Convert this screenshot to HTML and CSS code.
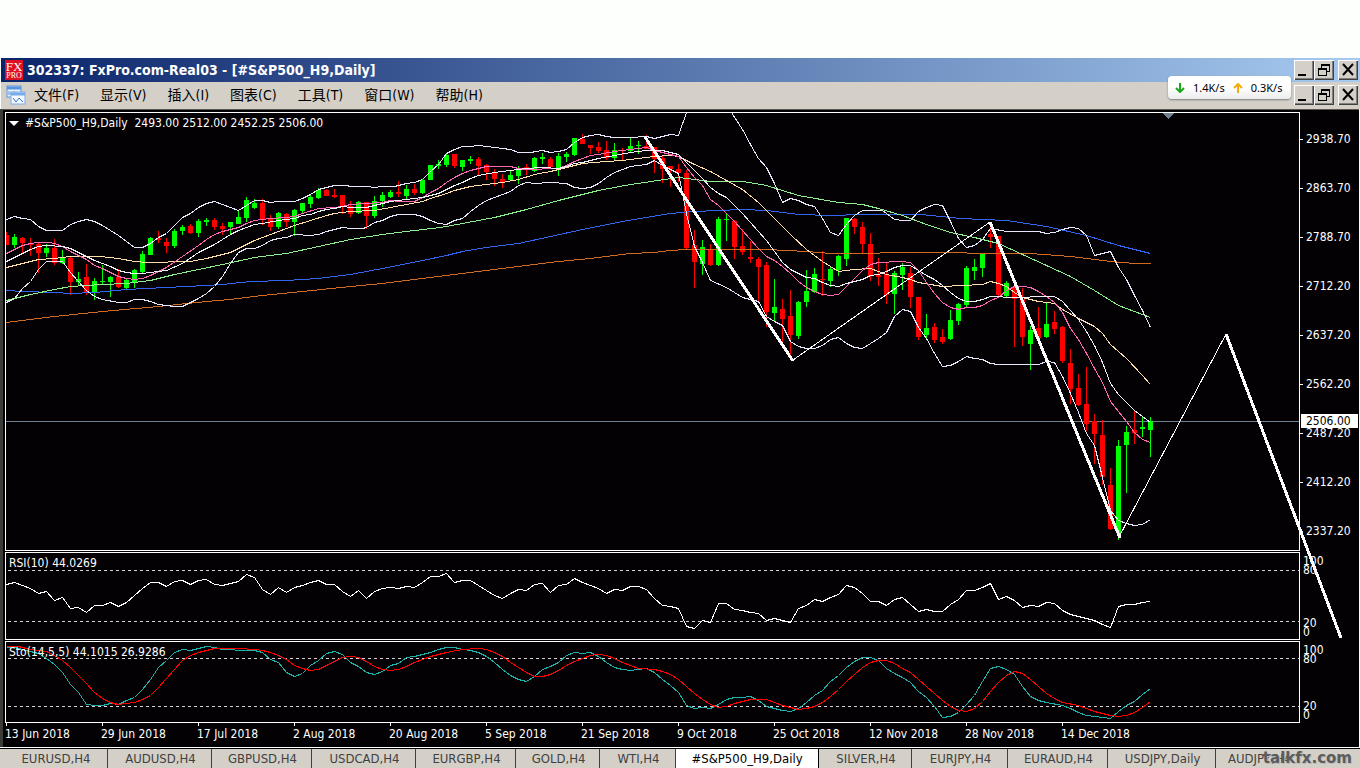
FILE: index.html
```html
<!DOCTYPE html>
<html lang="zh-CN">
<head>
<meta charset="utf-8">
<title>302337: FxPro.com-Real03 - [#S&amp;P500_H9,Daily]</title>
<link rel="stylesheet" href="styles.css">
</head>
<body>
<div class="window">
  <header class="titlebar">
    <div class="app-logo" aria-hidden="true"><span class="logo-fx">FX</span><span class="logo-pro">PRO</span></div>
    <h1 class="title">302337: FxPro.com-Real03 - [#S&amp;P500_H9,Daily]</h1>
    <div class="controls">
      <button class="control" aria-label="最小化"><svg viewBox="0 0 20 20"><path d="M4 14h8v2H4z"/></svg></button>
      <button class="control" aria-label="还原"><svg viewBox="0 0 20 20"><path d="M7 4h9v8h-3v4H4V8h3zM8 6v2h5v3h2V6zM5 10v5h7v-5z" fill-rule="evenodd"/></svg></button>
      <button class="control control-close" aria-label="关闭"><svg viewBox="0 0 20 20"><path d="M5 4l10 11M15 4L5 15" stroke="#000" stroke-width="2"/></svg></button>
    </div>
  </header>
  <nav class="menubar">
    <svg class="chart-logo" viewBox="0 0 20 20" aria-hidden="true">
      <rect x="1" y="1" width="14" height="11" fill="#e8f1fc" stroke="#5a94dc"/>
      <path d="M1 3h14" stroke="#5a94dc" stroke-width="3"/>
      <path d="M3 10V6M5 10V7M8 10V6" stroke="#5a94dc" fill="none"/>
      <rect x="5" y="7" width="14" height="12" fill="#f4f9ff" stroke="#78abea"/>
      <path d="M5 9h14" stroke="#78abea" stroke-width="3"/>
      <path d="M7 13l3 4 3-4 4 4" stroke="#3b79c9" fill="none"/>
    </svg>
    <button class="menu">文件(F)</button>
    <button class="menu">显示(V)</button>
    <button class="menu">插入(I)</button>
    <button class="menu">图表(C)</button>
    <button class="menu">工具(T)</button>
    <button class="menu">窗口(W)</button>
    <button class="menu">帮助(H)</button>
    <div class="controls">
      <button class="control" aria-label="最小化图表"><svg viewBox="0 0 20 20"><path d="M4 14h8v2H4z"/></svg></button>
      <button class="control" aria-label="还原图表"><svg viewBox="0 0 20 20"><path d="M7 4h9v8h-3v4H4V8h3zM8 6v2h5v3h2V6zM5 10v5h7v-5z" fill-rule="evenodd"/></svg></button>
      <button class="control control-close" aria-label="关闭图表"><svg viewBox="0 0 20 20"><path d="M5 4l10 11M15 4L5 15" stroke="#000" stroke-width="2"/></svg></button>
    </div>
  </nav>
  <aside class="net-speed">
    <svg viewBox="0 0 10 10"><path d="M5 0v9M1 5l4 4 4-4" stroke="#17a81c" stroke-width="2" fill="none"/></svg>
    <span>1.4K/s</span>
    <svg viewBox="0 0 10 10"><path d="M5 10V1M1 5l4-4 4 4" stroke="#f5a90b" stroke-width="2" fill="none"/></svg>
    <span>0.3K/s</span>
  </aside>

  <main class="workspace">
    <section class="pane pane-price">
      <svg class="plot" id="price" viewBox="6 113 1293 437" preserveAspectRatio="none"></svg>
      <p class="pane-label pane-label-price"><span class="caret"></span>#S&amp;P500_H9,Daily&nbsp; 2493.00 2512.00 2452.25 2506.00</p>
    </section>
    <div class="axis axis-price">
      <span>2938.70</span><span>2863.70</span><span>2788.70</span><span>2712.20</span><span>2637.20</span><span>2562.20</span><span>2487.20</span><span>2412.20</span><span>2337.20</span>
      <strong class="price-tag">2506.00</strong>
    </div>
    <section class="pane pane-rsi">
      <svg class="plot" id="rsi" viewBox="6 553 1293 86" preserveAspectRatio="none"></svg>
      <p class="pane-label">RSI(10) 44.0269</p>
    </section>
    <div class="axis axis-level">
      <div><span>100</span><span>80</span></div>
      <div><span>20</span><span>0</span></div>
    </div>
    <section class="pane pane-sto">
      <svg class="plot" id="sto" viewBox="6 642 1293 80" preserveAspectRatio="none"></svg>
      <p class="pane-label">Sto(14,5,5) 44.1015 26.9286</p>
    </section>
    <div class="axis axis-level">
      <div><span>100</span><span>80</span></div>
      <div><span>20</span><span>0</span></div>
    </div>
    <div class="dates">
      <span>13 Jun 2018</span><span>29 Jun 2018</span><span>17 Jul 2018</span><span>2 Aug 2018</span><span>20 Aug 2018</span><span>5 Sep 2018</span><span>21 Sep 2018</span><span>9 Oct 2018</span><span>25 Oct 2018</span><span>12 Nov 2018</span><span>28 Nov 2018</span><span>14 Dec 2018</span>
    </div>
    <svg class="trend" viewBox="5 112 1354 636" preserveAspectRatio="none" aria-hidden="true">
      <path class="trend-thin" d="M793 360L990 222M1119 537L1226 334"/>
      <path class="trend-thick" d="M645 137L793 361M990 222L1120 538M1226 334L1341 638"/>
    </svg>
  </main>

  <footer class="tabs" role="tablist">
    <button class="tab" role="tab">EURUSD,H4</button>
    <button class="tab" role="tab">AUDUSD,H4</button>
    <button class="tab" role="tab">GBPUSD,H4</button>
    <button class="tab" role="tab">USDCAD,H4</button>
    <button class="tab" role="tab">EURGBP,H4</button>
    <button class="tab" role="tab">GOLD,H4</button>
    <button class="tab" role="tab">WTI,H4</button>
    <button class="tab tab-active" role="tab" aria-selected="true">#S&amp;P500_H9,Daily</button>
    <button class="tab" role="tab">SILVER,H4</button>
    <button class="tab" role="tab">EURJPY,H4</button>
    <button class="tab" role="tab">EURAUD,H4</button>
    <button class="tab" role="tab">USDJPY,Daily</button>
    <button class="tab tab-last" role="tab">AUDJPY,H4</button>
    <span class="watermark">talkfx.com</span>
  </footer>
</div>
<script src="chart.js"></script>
</body>
</html>
```
FILE: styles.css
```css
* { box-sizing: border-box; }

body {
  margin: 0;
  background: #fdfffc;
  color: #000;
  font-family: "DejaVu Sans Condensed", "Noto Sans CJK SC", sans-serif;
  font-size: 12px;
  overflow: hidden;
}

button {
  margin: 0;
  padding: 0;
  border: 0;
  background: none;
  color: inherit;
  font: inherit;
}

.window {
  position: relative;
  display: flex;
  flex-direction: column;
  min-height: 100vh;
  padding-top: 58px;
}

.titlebar {
  display: flex;
  align-items: center;
  height: 24px;
  padding: 0 2px 0 4px;
  margin-left: 1px;
  background: linear-gradient(90deg, #0a246a, #a6caf0);
}

.app-logo {
  display: flex;
  flex-direction: column;
  align-items: center;
  justify-content: center;
  width: 18px;
  height: 20px;
  background: #e01022;
  color: #fff;
  font-family: "Liberation Serif", serif;
}

.logo-fx { font-size: 13px; line-height: 11px; }
.logo-pro { font-size: 8px; line-height: 8px; }

.title {
  flex: 1;
  margin: 0 0 0 4px;
  color: #fff;
  font-size: 14px;
  font-weight: bold;
  line-height: 20px;
  white-space: nowrap;
}

.controls { display: flex; margin-left: auto; }

.control {
  width: 20px;
  height: 20px;
  background: #d4d0c8;
  box-shadow: inset 1px 1px #fff, inset -1px -1px #404040, inset -2px -2px #808080;
}

.control svg { display: block; width: 20px; height: 20px; shape-rendering: crispEdges; }
.control-close { margin-left: 4px; }
.control-close svg { shape-rendering: auto; }

.menubar {
  display: flex;
  align-items: center;
  gap: 21px;
  height: 27px;
  padding: 0 2px 2px 5px;
  margin-left: 1px;
  background: #d4d0c8;
}

.chart-logo { width: 20px; height: 20px; margin-right: -13px; }

.menu {
  font-size: 14px;
  line-height: 24px;
  white-space: nowrap;
}

.net-speed {
  position: absolute;
  top: 76px;
  right: 69px;
  display: flex;
  align-items: center;
  gap: 8px;
  width: 123px;
  height: 23px;
  padding: 0 7px;
  border-radius: 4px;
  background: linear-gradient(#fff, #fff 50%, #ececec);
  box-shadow: 0 1px 2px #7d7d7d;
  font-family: "Noto Sans", sans-serif;
  font-size: 11px;
}

.net-speed svg { flex: none; width: 10px; height: 10px; }

.workspace {
  position: relative;
  display: grid;
  grid-template-columns: 1fr 59px;
  grid-template-rows: 439px 88px 82px auto;
  row-gap: 1px;
  padding: 2px 0 0 2px;
  margin-right: 1px;
  border-top: 1px solid #58564f;
  border-left: 3px solid #3b3c38;
  background: #030104;
  color: #fff;
}

.pane { position: relative; min-width: 0; border: 1px solid #fff; }
.plot { display: block; width: 100%; height: 100%; shape-rendering: crispEdges; }
.plot polyline { fill: none; stroke-width: 1; }

.pane-label {
  position: absolute;
  top: 2px;
  left: 3px;
  margin: 0;
  line-height: 16px;
  white-space: nowrap;
}

.pane-label-price { display: flex; align-items: center; gap: 6px; }

.caret {
  border: 5px solid transparent;
  border-top-color: #fff;
  border-bottom-width: 0;
}

.axis { position: relative; display: flex; flex-direction: column; }
.axis span { display: block; padding-left: 6px; }
.axis-price { padding-top: 3px; }
.axis-price span { position: relative; line-height: 49px; }

.axis-price span::before {
  content: "";
  position: absolute;
  top: 24px;
  left: 0;
  width: 3px;
  height: 1px;
  background: #fff;
}

.price-tag {
  position: absolute;
  top: 302px;
  left: 1px;
  right: 1px;
  padding-left: 5px;
  background: #fff;
  color: #000;
  font-weight: normal;
  line-height: 14px;
}

.axis-level { justify-content: space-between; padding: 5px 0 3px; }
.axis-level span { padding-left: 3px; line-height: 9px; }

.dates {
  display: grid;
  grid-template-columns: repeat(12, 96fr) 143fr;
  height: 25px;
  margin-top: -1px;
}

.dates span { position: relative; line-height: 22px; white-space: nowrap; }

.dates span::before {
  content: "";
  position: absolute;
  top: 0;
  left: 1px;
  width: 1px;
  height: 3px;
  background: #fff;
}

.trend {
  position: absolute;
  top: 2px;
  left: 2px;
  width: calc(100% - 2px);
  height: calc(100% - 2px);
  pointer-events: none;
  shape-rendering: crispEdges;
  fill: none;
  stroke: #fff;
}

.trend-thin { stroke-width: 1; }
.trend-thick { stroke-width: 3; }

.tabs {
  position: relative;
  display: grid;
  grid-template-columns: 105fr 104fr 100fr 104fr 100fr 84fr 76fr 143fr 93fr 96fr 100fr 108fr 144fr;
  flex: 1;
  padding-left: 3px;
  border-top: 1px solid #000;
  outline: 1px solid #fff;
  background: #d4d0c8;
  overflow: hidden;
}

.tab {
  padding-left: 2px;
  border-right: 1px solid #404040;
  color: #404040;
  font-size: 13px;
  line-height: 19px;
  white-space: nowrap;
}

.tab-active {
  padding-left: 0;
  border-right-color: #000;
  background: #fff;
  color: #000;
}

.tab-last { padding-left: 12px; border-right: 0; text-align: left; }

.watermark {
  position: absolute;
  right: 8px;
  bottom: 1px;
  color: #5c5c5c;
  font-family: "DejaVu Sans", sans-serif;
  font-size: 15px;
  font-weight: bold;
  line-height: 18px;
  text-shadow: 1px 1px #b8b8b8;
}
```
FILE: chart.js
```js
const STEP = 8;
const FIRST_X = 6;
const UP = "#00ff00";
const DOWN = "#ff0000";

// One bar per entry: direction, high, body top, body bottom, low.
const bars = `
d232,235,245,245 u234,237,245,248 d237,238,243,253 d238,244,245,256 d243,244,253,273
u244,248,253,257 d239,248,263,265 u250,257,263,264 d257,258,282,295 u272,279,282,286
d264,277,292,295 u278,281,292,300 u265,281,282,284 u276,277,282,297 d269,277,287,288
u279,280,288,289 u269,270,282,288 u251,254,272,274 u237,238,255,255 d231,238,240,243
d238,242,246,253 u229,231,246,248 u225,227,231,235 d224,226,233,234 u219,221,233,237
u218,220,222,226 d218,220,227,230 d223,226,229,235 u222,222,227,235 u210,217,224,224
u197,200,218,222 u199,203,208,209 d199,203,219,225 d215,218,227,231 u212,213,227,229
d213,214,222,227 u209,210,222,236 u203,203,211,213 u195,197,204,208 u188,190,198,199
d189,190,196,196 d189,195,197,198 d195,195,206,214 d201,206,214,217 u201,202,213,214
d202,202,216,229 u196,201,216,218 u192,195,201,207 u190,192,197,198 d181,192,194,197
u185,189,196,199 d184,189,193,195 u179,180,193,194 u165,165,180,180 u160,164,166,169
u153,155,165,167 d154,154,166,168 u160,160,167,171 u156,159,161,164 d157,159,166,175
d164,165,172,180 d169,173,179,186 d174,179,182,188 u170,175,180,180 u166,169,176,184
d164,167,169,175 u157,158,171,172 u153,157,159,164 d157,159,167,168 u153,156,169,176
u152,154,157,162 u138,138,155,156 d134,139,144,144 d145,145,148,154 d142,147,151,153
d141,150,158,160 u143,150,158,160 d148,150,151,160 u138,146,151,152 u141,145,146,154
d135,146,149,149 d147,147,159,173 d155,158,169,183 d166,166,169,187 d164,169,173,182
d170,173,248,250 d230,245,262,288 u240,247,264,275 d244,250,265,266 u217,219,265,266
u214,219,220,241 d220,221,247,259 d229,246,252,255 d241,257,259,263 d257,259,267,301
d262,265,312,327 u279,307,313,321 d299,309,319,343 d290,316,335,355 u301,302,336,339
u270,291,302,307 u268,274,292,293 d251,279,280,296 u266,269,281,287 u255,256,270,276
u218,218,259,266 d218,219,227,234 d222,227,244,253 d233,244,276,281 d258,275,277,286
d263,274,295,304 u271,273,294,314 u263,267,275,290 d267,273,297,308 d297,297,337,340
u314,328,335,340 d323,327,340,343 d329,337,342,344 u310,320,339,340 u303,304,321,325
u266,268,305,307 u259,267,271,280 u253,254,268,277 d227,234,237,248 d236,236,295,297
u281,283,296,297 d286,287,299,347 d288,299,337,346 u326,330,344,370 d307,328,338,342
u302,324,337,338 d311,322,329,334 d326,327,361,363 d349,363,389,404 d374,388,405,406
d367,404,424,431 d414,421,434,464 d420,435,477,485 d468,485,529,530 u440,446,533,540
u426,432,445,493 d410,430,433,444 u417,427,429,437 u417,421,430,457`.trim().split(/\s+/);

const averages = [
  ["#d2691e", "6,322 54,316 102,311 158,306 206,301 230,299 262,295 302,291 350,286 382,283 422,278 446,275 486,270 526,265 558,261 590,258 630,253 654,252 670,250 686,249 766,249 806,251 830,253 860,253 900,252 1030,253 1070,256 1110,261 1134,263 1150,263"],
  ["#3465f0", "6,290 22,291 54,292 70,293 94,292 126,289 166,287 206,285 222,284 250,281 286,280 318,278 350,274 382,268 422,260 446,255 462,251 486,247 518,243 550,236 582,229 622,221 646,217 670,213 694,211 742,209 766,210 798,214 830,215 862,214 920,214 960,218 1006,220 1046,226 1086,235 1118,245 1150,253"],
  ["#90ee90", "6,300 30,294 54,289 70,286 102,284 126,283 150,280 174,274 198,269 222,264 254,257 286,253 318,246 350,239 382,234 414,230 440,227 462,223 494,217 526,209 558,200 598,190 630,184 678,177 694,179 710,181 742,181 766,185 798,195 838,202 862,204 878,208 902,215 926,224 950,232 974,237 998,243 1022,254 1046,265 1070,276 1094,290 1118,305 1134,311 1150,317"],
  ["#ffdead", "6,267 22,263 38,259 54,258 70,256 100,256 118,258 134,261 146,262 190,261 206,258 222,254 230,252 238,248 246,244 254,240 270,234 286,228 294,225 310,220 326,215 334,213 350,211 374,210 390,207 406,204 422,201 430,198 446,193 454,190 470,186 486,184 502,182 518,179 534,174 550,171 566,167 582,163 606,161 622,160 638,158 654,156 670,155 678,156 694,164 710,171 726,180 742,189 758,202 774,218 790,234 806,249 822,261 838,271 854,269 870,268 886,274 902,277 910,279 918,282 942,286 982,284 990,281 998,283 1006,286 1014,292 1022,297 1038,301 1054,303 1062,309 1078,318 1094,326 1102,333 1110,344 1126,358 1142,375 1150,384"],
  ["#ff69b4", "6,253 14,249 22,245 30,243 38,242 48,242 54,243 62,246 70,251 78,255 86,259 94,265 102,268 110,272 118,276 126,278 134,279 142,278 150,275 166,267 182,256 198,245 206,239 214,234 222,231 230,229 238,227 246,223 254,220 262,219 270,218 286,217 294,216 302,213 318,208 334,207 342,206 350,204 366,203 382,202 390,200 398,201 414,201 422,197 430,192 438,188 446,182 454,177 462,173 470,170 478,168 486,166 510,166 518,168 526,169 558,168 566,165 574,161 582,158 590,155 598,154 614,151 630,149 646,147 654,150 662,152 678,156 686,167 694,177 702,185 710,199 718,205 726,213 734,221 742,230 750,239 758,248 766,256 774,260 782,266 790,273 798,281 806,287 814,291 822,294 830,295 838,294 846,286 854,278 862,270 870,264 878,262 900,261 910,262 918,270 926,282 934,293 942,302 950,307 958,309 966,307 974,307 982,305 990,300 998,297 1006,290 1014,286 1022,286 1030,287 1038,291 1046,296 1054,302 1062,312 1070,328 1078,339 1086,353 1094,368 1102,382 1110,401 1118,411 1126,421 1134,432 1142,439 1150,442"],
  ["#f0f0fa", "6,261 14,257 22,253 30,249 38,246 46,245 62,246 70,248 78,252 86,256 94,260 102,263 110,266 118,270 126,272 134,273 142,273 150,272 166,270 182,263 198,252 214,244 222,239 230,234 238,230 246,227 254,224 262,223 278,220 294,218 302,215 310,214 318,211 326,209 334,208 342,206 350,207 366,207 374,205 382,203 390,201 406,199 422,197 430,195 438,193 446,189 454,185 462,182 470,178 478,175 494,172 510,170 526,168 542,167 558,168 566,166 574,163 582,162 598,158 614,155 630,152 646,150 662,150 670,152 678,154 686,162 694,170 702,178 710,187 718,193 726,197 734,205 742,213 750,222 758,231 766,240 774,251 782,262 790,269 798,273 806,277 814,278 822,282 830,285 838,286 846,283 854,281 862,279 870,275 878,274 886,271 894,267 902,265 910,265 918,270 926,275 934,279 942,285 950,292 958,298 966,301 974,301 982,299 990,296 998,296 1006,297 1054,296 1062,301 1070,310 1078,319 1086,331 1094,345 1102,362 1110,383 1118,394 1126,402 1134,410 1142,416 1150,422"],
];

const bands = [
  ["#e6e6fa", "6,219 14,216 22,218 30,219 38,226 46,230 62,230 70,224 78,221 86,219 94,221 102,225 110,230 118,235 126,241 134,247 142,247 150,243 158,237 166,233 174,225 182,217 190,213 198,207 206,203 214,201 222,204 230,207 238,210 246,205 254,200 262,200 270,202 278,201 294,201 302,198 310,194 318,189 326,187 334,185 346,185 350,186 366,186 374,187 382,186 394,186 398,185 406,183 414,182 422,179 430,171 438,164 446,153 454,149 462,146 470,146 478,145 494,147 510,149 518,152 530,152 542,150 550,152 558,151 566,149 574,142 582,137 590,135 598,134 606,136 614,137 630,137 646,136 654,138 662,136 670,134 678,135 686,112"],
  ["#e6e6fa", "731,112 742,129 750,144 758,158 766,167 774,183 782,202 790,198 798,200 806,204 814,206 822,218 830,232 838,235 846,224 854,215 862,210 882,210 886,213 894,219 902,220 910,220 918,211 926,207 934,204 942,205 950,221 958,238 966,247 974,245 982,239 990,228 1006,231 1038,231 1046,233 1054,232 1062,229 1070,227 1078,228 1086,235 1094,255 1110,251 1118,267 1126,279 1134,295 1142,310 1150,327"],
  ["#e6e6fa", "6,302 14,298 22,288 30,281 38,269 46,261 62,261 70,272 78,281 86,290 94,296 102,299 118,302 126,302 134,299 142,299 150,301 158,304 174,306 182,306 190,302 198,298 206,293 214,286 222,276 230,263 238,252 246,248 254,248 262,245 270,240 278,238 286,237 294,234 310,235 318,234 326,231 334,229 342,227 350,228 362,228 366,227 374,222 382,220 390,216 398,214 414,214 422,216 430,220 438,223 446,224 454,220 462,218 470,211 478,205 486,200 494,197 502,194 510,191 518,185 526,182 534,183 550,182 566,183 574,187 582,188 590,187 598,183 606,177 614,172 622,169 630,166 646,164 654,160 662,165 670,169 678,173 686,213 694,246 702,262 710,280 726,287 742,297 758,301 766,316 774,321 782,325 790,341 798,346 806,348 814,348 822,345 830,339 838,337 846,343 854,347 862,348 870,343 878,338 886,332 894,316 902,309 910,311 918,327 926,338 934,353 942,366 950,365 958,361 966,356 974,358 982,359 990,363 998,364 1038,364 1046,361 1054,362 1062,376 1070,393 1078,412 1086,433 1094,445 1102,477 1110,510 1118,520 1126,523 1134,525 1142,524 1150,519"],
];

// Relative strength, one value per bar.
const rsi = [
  584,582,585,588,593,591,600,597,608,607,612,605,605,602,606,602,595,588,582,582,586,581,580,584,
  580,579,584,585,583,581,574,577,589,594,587,592,587,585,582,580,584,584,591,596,590,598,591,588,
  587,588,586,587,582,576,576,573,582,580,580,585,590,595,598,593,589,590,584,583,592,585,584,578,
  582,585,588,593,589,590,586,586,589,598,605,606,608,626,628,620,622,603,603,609,610,612,613,620,
  618,620,622,608,605,599,601,597,594,585,587,593,601,601,605,599,597,604,611,609,611,611,604,599,
  590,590,587,583,599,596,600,607,605,606,602,603,610,614,616,618,620,624,627,606,604,604,602,601,
];

// Stochastic main and signal lines.
const main = "6,647 14,647 22,649 30,651 38,653 46,658 54,664 62,672 70,684 78,692 86,704 94,705 102,705 110,703 118,704 126,700 134,697 142,689 150,679 158,667 166,660 174,652 182,649 190,650 198,648 206,646 214,647 222,649 230,649 238,650 254,650 262,652 270,659 278,662 286,672 294,676 302,673 310,665 318,660 326,653 334,651 342,654 350,662 358,666 366,672 374,674 382,671 390,665 398,663 406,657 414,656 422,654 430,652 438,649 446,647 454,647 462,649 470,650 478,652 486,656 494,662 502,669 510,675 518,679 526,681 534,676 542,669 550,666 558,662 566,655 574,652 582,653 590,652 598,656 606,662 614,667 622,669 630,670 638,669 646,668 654,672 662,679 670,685 678,692 686,705 694,708 702,707 710,708 718,704 726,699 734,697 742,697 750,696 758,700 766,706 774,708 782,710 790,711 798,708 806,702 814,695 822,690 830,681 838,675 846,667 854,661 862,657 870,657 878,660 886,668 894,673 902,677 910,682 918,691 926,697 934,706 942,717 950,716 958,712 966,704 974,695 982,681 990,668 998,666 1006,669 1014,674 1022,686 1030,696 1038,700 1046,702 1062,705 1070,708 1078,712 1086,715 1094,716 1110,718 1118,711 1126,705 1134,701 1142,694 1150,688";
const signal = "6,646 18,646 30,649 46,651 54,655 62,660 70,667 78,675 86,683 94,692 102,698 110,702 118,704 134,702 142,699 150,695 158,687 166,678 174,669 182,660 190,655 198,652 206,650 214,648 238,648 254,649 262,650 270,652 278,655 286,659 294,665 302,668 310,670 318,669 326,665 334,661 342,657 350,656 358,657 366,661 374,666 382,669 390,670 398,669 406,666 414,662 430,656 446,652 462,649 478,648 486,649 494,652 502,656 510,662 518,667 526,672 534,676 542,676 550,674 558,670 566,665 574,661 582,658 590,655 598,654 606,655 614,658 622,662 630,665 638,668 654,669 662,671 670,674 678,679 686,686 694,693 702,699 710,704 718,707 726,706 734,703 742,701 750,699 766,699 774,702 782,705 790,707 798,709 806,708 814,706 822,702 830,696 838,689 846,681 854,674 862,667 870,662 878,660 886,660 894,663 902,668 910,672 918,679 926,686 934,693 942,700 950,706 958,710 966,711 974,708 982,701 990,691 998,682 1006,675 1014,671 1022,673 1030,679 1038,686 1046,693 1054,698 1062,702 1078,705 1094,711 1110,715 1118,716 1126,715 1134,712 1142,707 1150,701";

function line(color, points) {
  return `<polyline transform="translate(.5 .5)" stroke="${color}" points="${points}"/>`;
}

function level(y) {
  return `<path transform="translate(.5 .5)" d="M7 ${y}H1299" stroke="#d8cfd8" stroke-dasharray="3 3"/>`;
}

function candle(entry, i) {
  const color = entry[0] === "u" ? UP : DOWN;
  const [high, top, bottom, low] = entry.slice(1).split(",").map(Number);
  const x = FIRST_X + i * STEP;
  return `<path fill="${color}" d="M${x} ${high}h1V${low}h-1zM${x - 2} ${top}h5V${bottom}h-5z"/>`;
}

const lines = (list) => list.map(([color, points]) => line(color, points)).join("");

document.getElementById("price").innerHTML =
  `<path d="M6 421h1293v1H6z" fill="#708090"/>` +
  bars.map(candle).join("") + lines(averages) + lines(bands) +
  `<path d="M1163 113h11l-5 6h-1z" fill="#708090"/>`;

document.getElementById("rsi").innerHTML =
  level(570) + level(621) + line("#fff", rsi.map((y, i) => `${FIRST_X + i * STEP},${y}`).join(" "));

document.getElementById("sto").innerHTML =
  level(658) + level(706) + line("#20b2aa", main) + line("#ff0000", signal);
```
